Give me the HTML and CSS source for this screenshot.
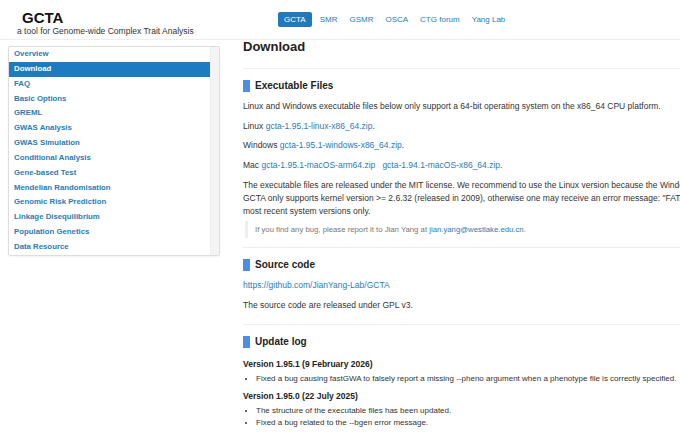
FILE: index.html
```html
<!DOCTYPE html>
<html>
<head>
<meta charset="utf-8">
<link rel="stylesheet" href="styles.css">
</head>
<body>
<header class="topbar">
  <div class="brand">
    <div class="brand-title">GCTA</div>
    <div class="brand-sub">a tool for Genome-wide Complex Trait Analysis</div>
  </div>
  <nav class="topnav">
    <a class="nav-item active">GCTA</a>
    <a class="nav-item">SMR</a>
    <a class="nav-item">GSMR</a>
    <a class="nav-item">OSCA</a>
    <a class="nav-item">CTG forum</a>
    <a class="nav-item">Yang Lab</a>
  </nav>
</header>
<div class="layout">
  <aside class="sidebar">
    <ul class="side-list">
      <li class="side-item">Overview</li>
      <li class="side-item active">Download</li>
      <li class="side-item">FAQ</li>
      <li class="side-item">Basic Options</li>
      <li class="side-item">GREML</li>
      <li class="side-item">GWAS Analysis</li>
      <li class="side-item">GWAS Simulation</li>
      <li class="side-item">Conditional Analysis</li>
      <li class="side-item">Gene-based Test</li>
      <li class="side-item">Mendelian Randomisation</li>
      <li class="side-item">Genomic Risk Prediction</li>
      <li class="side-item">Linkage Disequilibrium</li>
      <li class="side-item">Population Genetics</li>
      <li class="side-item">Data Resource</li>
    </ul>
    <div class="scrolltrack"></div>
  </aside>
  <main class="content">
    <h1 class="page-title">Download</h1>
    <section class="sec">
      <h2 class="sec-title"><span class="mark"></span>Executable Files</h2>
      <p>Linux and Windows executable files below only support a 64-bit operating system on the x86_64 CPU platform.</p>
      <p>Linux <a>gcta-1.95.1-linux-x86_64.zip</a>.</p>
      <p>Windows <a>gcta-1.95.1-windows-x86_64.zip</a>.</p>
      <p>Mac <a>gcta-1.95.1-macOS-arm64.zip</a> &nbsp; <a>gcta-1.94.1-macOS-x86_64.zip</a>.</p>
      <p class="multi">The executable files are released under the MIT license. We recommend to use the Linux version because the Windows and Mac versions are less tested. GCTA only supports kernel version &gt;= 2.6.32 (released in 2009), otherwise one may receive an error message: "FATAL: kernel too old". Please use the most recent system versions only.</p>
      <blockquote class="note">If you find any bug, please report it to Jian Yang at <a>jian.yang@westlake.edu.cn</a>.</blockquote>
    </section>
    <section class="sec">
      <h2 class="sec-title"><span class="mark"></span>Source code</h2>
      <p><a>https://github.com/JianYang-Lab/GCTA</a></p>
      <p>The source code are released under GPL v3.</p>
    </section>
    <section class="sec last">
      <h2 class="sec-title"><span class="mark"></span>Update log</h2>
      <h3 class="ver">Version 1.95.1 (9 February 2026)</h3>
      <ul class="bul">
        <li>Fixed a bug causing fastGWA to falsely report a missing --pheno argument when a phenotype file is correctly specified.</li>
      </ul>
      <h3 class="ver">Version 1.95.0 (22 July 2025)</h3>
      <ul class="bul">
        <li>The structure of the executable files has been updated.</li>
        <li>Fixed a bug related to the --bgen error message.</li>
      </ul>
    </section>
  </main>
</div>
</body>
</html>
```
FILE: styles.css
```css
html, body { margin: 0; padding: 0; }
body {
  width: 680px;
  height: 432px;
  overflow: hidden;
  font-family: "Liberation Sans", Arial, sans-serif;
  color: #333;
  background: #fff;
  font-size: 8.5px;
}
a { color: #2a7bb8; text-decoration: none; }
.topbar {
  display: flex;
  align-items: flex-start;
  height: 40px;
  border-bottom: 1px solid #eee;
  box-sizing: border-box;
}
.brand { padding: 10px 0 0 17px; width: 261px; }
.brand-title { font-size: 15px; font-weight: bold; margin-left: 5px; line-height: 16px; color: #111; }
.brand-sub { font-size: 8.5px; line-height: 11px; color: #333; }
.topnav { display: flex; margin-top: 12px; }
.nav-item {
  font-size: 8px;
  color: #2a7bb8;
  padding: 0 6px;
  height: 15px;
  line-height: 15px;
  border-radius: 2px;
}
.nav-item.active { background: #2179bd; color: #fff; padding: 0 6px; margin-right: 2px; }
.layout { display: flex; align-items: flex-start; width: 900px; }
.sidebar {
  margin: 6px 0 0 8px;
  width: 212px;
  height: 210px;
  border: 1px solid #ddd;
  border-radius: 2px;
  box-sizing: border-box;
  display: flex;
  box-shadow: 0 1px 2px rgba(0,0,0,0.05);
}
.side-list { list-style: none; margin: 0; padding: 0; flex: 1; font-size: 7.8px; }
.side-item {
  font-weight: bold;
  color: #2a7bb8;
  height: 14.85px;
  line-height: 14.85px;
  padding-left: 5px;
}
.side-item.active { background: #1f7bbf; color: #fff; }
.scrolltrack { width: 8px; background: #f4f4f4; border-left: 1px solid #eee; }
.content { margin-left: 23px; width: 582px; flex: none; }
.page-title { font-size: 13px; font-weight: bold; margin: 0; line-height: 14px; height: 28px; border-bottom: 1px solid #eee; color: #222; }
.sec { border-bottom: 1px solid #eee; padding: 10px 0 0; }
.sec.last { border-bottom: none; }
.sec-title { display: flex; align-items: center; font-size: 10px; font-weight: bold; margin: 0 0 8px; line-height: 13px; color: #222; }
.mark { width: 7px; height: 12px; background: #4a8ee6; margin-right: 5px; }
p { margin: 0 0 7.7px; line-height: 12px; }
.multi { line-height: 13px; }
.note { margin: -4px 0 9px 2px; border-left: 3px solid #eee; padding: 2px 0 2px 7px; color: #777; line-height: 13px; font-size: 7.75px; }
.sec p:last-child { margin-bottom: 13px; }
.ver { font-size: 8.5px; font-weight: bold; margin: 0 0 3px; line-height: 12px; color: #222; }
.sec-title + .ver { margin-top: 10px; }
.bul { margin: 0 0 5px; padding-left: 13px; line-height: 12px; font-size: 8px; }
```
